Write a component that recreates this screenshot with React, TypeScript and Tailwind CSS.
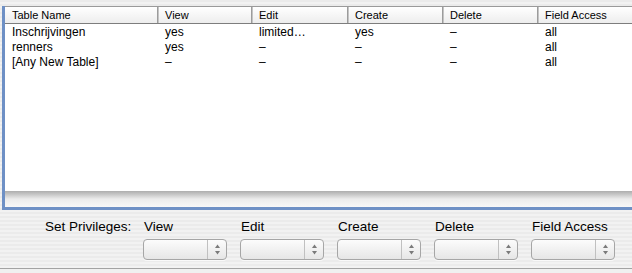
import React from "react";

const cols = [
  { name: "Table Name", w: 152, pl: 7 },
  { name: "View", w: 92, pl: 6 },
  { name: "Edit", w: 94, pl: 6 },
  { name: "Create", w: 93, pl: 6 },
  { name: "Delete", w: 93, pl: 6 },
  { name: "Field Access", w: 100, pl: 6 },
];

const rows = [
  ["Inschrijvingen", "yes", "limited…", "yes", "–", "all"],
  ["renners", "yes", "–", "–", "–", "all"],
  ["[Any New Table]", "–", "–", "–", "–", "all"],
];

function Popup() {
  return (
    <div className="w-[84px] h-[21px] rounded-[4px] border border-[#a6a6a6] bg-linear-to-b from-[#fcfcfc] via-[#f1f1f1] to-[#e6e6e6] flex shadow-[0_1px_0_rgba(255,255,255,0.7)]">
      <div className="flex-1" />
      <div className="w-[19px] border-l border-[#c0c0c0] flex items-center justify-center">
        <svg width="7" height="13" viewBox="0 0 7 13">
          <path d="M3.5 1.5 L6 5 L1 5 Z" fill="#7a7a7a" />
          <path d="M1 8 L6 8 L3.5 11.5 Z" fill="#7a7a7a" />
        </svg>
      </div>
    </div>
  );
}

export default function App() {
  return (
    <div className="w-[632px] h-[273px] overflow-hidden flex flex-col font-['Liberation_Sans',Arial,sans-serif] text-black bg-[image:repeating-linear-gradient(to_bottom,#ebebeb_0px,#ebebeb_2px,#f2f2f2_2px,#f2f2f2_4px)]">
      <div className="pt-[6px] pl-[2px]">
        <div className="w-[660px] border-l-[3px] border-b-[3px] border-t border-[#6e90c5] shadow-[inset_1px_0_0_#4f74aa,inset_0_-1px_0_#4f74aa]">
          {/* header */}
          <div className="flex h-[18px] border-b border-[#7d7d7d] bg-linear-to-b from-white to-[#ededed] border-t border-t-[#9a9a9a] -mt-px">
            {cols.map((c, i) => (
              <React.Fragment key={c.name}>
                <div
                  className="h-full flex items-center text-[11px] leading-[17px] whitespace-nowrap"
                  style={{ width: c.w, paddingLeft: c.pl }}
                >
                  {c.name}
                </div>
                {i < cols.length - 1 && <div className="w-[2px] h-full bg-[#9c9c9c] border-r border-[#c4c4c4]" />}
              </React.Fragment>
            ))}
          </div>
          {/* body */}
          <div className="h-[167px] bg-white flex flex-col pt-px">
            {rows.map((r, ri) => (
              <div key={ri} className="flex h-[15px] items-center">
                {r.map((cell, ci) => (
                  <div
                    key={ci}
                    className="text-[12px] leading-[15px] whitespace-nowrap"
                    style={{ width: cols[ci].w + (ci < cols.length - 1 ? 2 : 0), paddingLeft: cols[ci].pl }}
                  >
                    {cell}
                  </div>
                ))}
              </div>
            ))}
          </div>
          {/* bottom gradient strip */}
          <div className="h-[16px] bg-linear-to-b from-[#adadad] via-[#ebebeb] to-[#f7f7f7]" />
        </div>
      </div>

      <div className="flex pl-[45px] pt-[9px]">
        <div className="w-[98px] text-[13.5px] leading-[16px] whitespace-nowrap">Set Privileges:</div>
        {["View", "Edit", "Create", "Delete", "Field Access"].map((l) => (
          <div key={l} className="w-[97px] flex flex-col">
            <div className="text-[13.5px] leading-[16px] pl-[1px] whitespace-nowrap">{l}</div>
            <div className="mt-[4px]">
              <Popup />
            </div>
          </div>
        ))}
      </div>
      <div className="mt-[8px] h-px bg-[#a3a3a3]" />
      <div className="flex-1 bg-[#f0f0f0]" />
    </div>
  );
}
